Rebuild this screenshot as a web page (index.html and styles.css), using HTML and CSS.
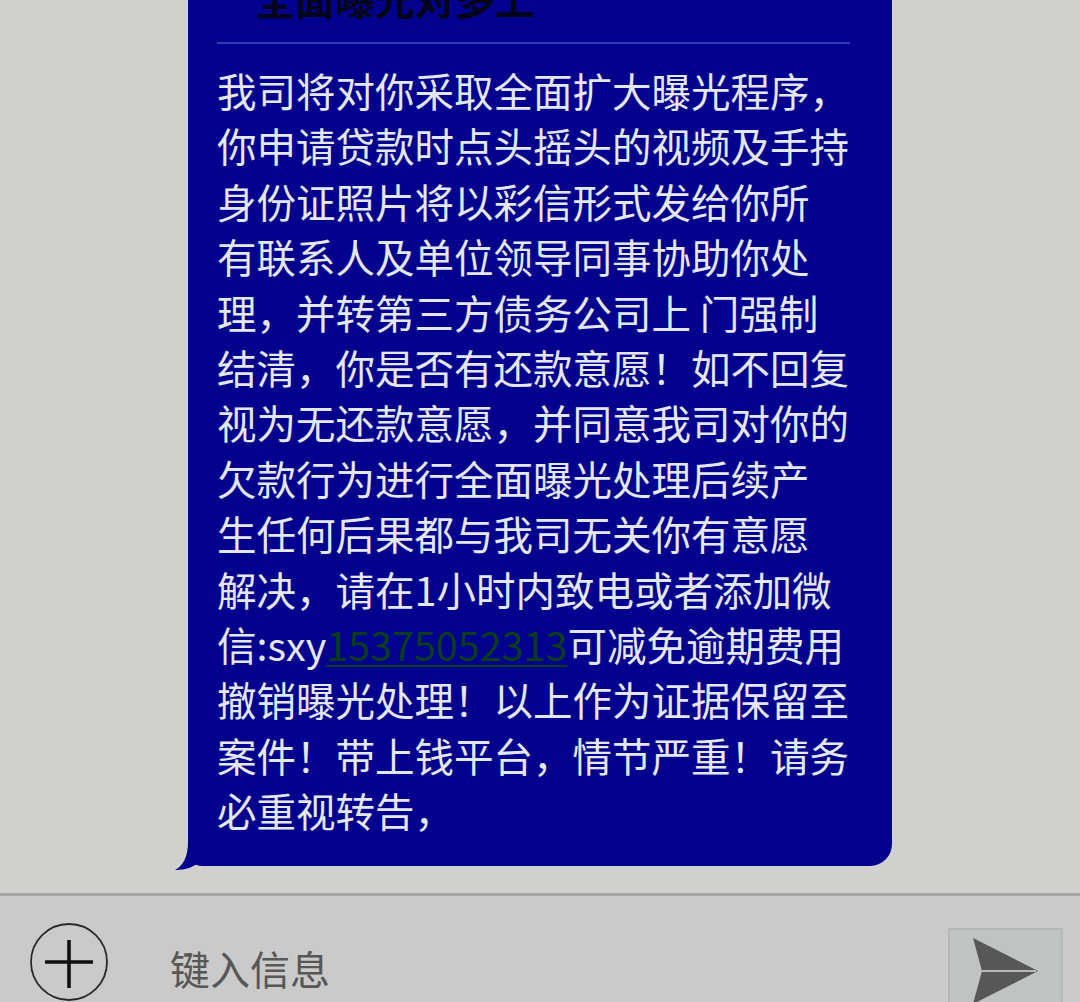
FILE: index.html
```html
<!DOCTYPE html>
<html lang="zh-CN">
<head>
<meta charset="utf-8">
<title>信息</title>
<link rel="stylesheet" href="styles.css">
</head>
<body>
<div class="screen">
  <div class="chat">
    <div class="bubble">
      <div class="title">全面曝光对多上</div>
      <div class="sep"></div>
      <div class="msg">我司将对你采取全面扩大曝光程序，<br>你申请贷款时点头摇头的视频及手持<br>身份证照片将以彩信形式发给你所<br>有联系人及单位领导同事协助你处<br>理，并转第三方债务公司上 门强制<br>结清，你是否有还款意愿！如不回复<br>视为无还款意愿，并同意我司对你的<br>欠款行为进行全面曝光处理后续产<br>生任何后果都与我司无关你有意愿<br>解决，请在1小时内致电或者添加微<br>信:sxy<span class="link">15375052313</span>可减免逾期费用<br>撤销曝光处理！以上作为证据保留至<br>案件！带上钱平台，情节严重！请务<br>必重视转告，</div>
      <svg class="tail" width="44" height="40" viewBox="0 0 44 40"><path d="M13 0 V12 Q13 33 0 40 Q17 40 25 31 Q30 36 38 36 H44 V0 Z" fill="#02018e"/></svg>
    </div>
  </div>
  <div class="bar">
    <div class="plus">
      <svg width="78" height="78" viewBox="0 0 78 78"><circle cx="39" cy="39" r="38" fill="none" stroke="#2a2a2a" stroke-width="1.8"/><path d="M15 39 H63 M39 17 V65" stroke="#111" stroke-width="3.6"/></svg>
    </div>
    <div class="placeholder">键入信息</div>
    <div class="send">
      <svg width="115" height="80" viewBox="0 0 115 80"><path d="M25 9 L90 42 L25 75 L34 42 Z" fill="#575757"/><path d="M34 42 L88 42" stroke="#d8d8d8" stroke-width="1.5"/></svg>
    </div>
  </div>
</div>
</body>
</html>
```

FILE: styles.css
```css
html, body {
  margin: 0;
  padding: 0;
  background: #cdcdcd;
}
.screen {
  width: 1080px;
  height: 1002px;
  overflow: hidden;
  font-family: "Noto Sans CJK SC", "Noto Sans", sans-serif;
  background: #cfcfcf;
}
.chat {
  height: 893px;
  overflow: hidden;
  background: #d0d0cf;
}
.bubble {
  position: relative;
  margin-left: 188px;
  margin-top: -40px;
  width: 704px;
  box-sizing: border-box;
  padding: 10px 42px 28px 29px;
  background: #02018e;
  border-radius: 0 0 22px 14px;
}
.title {
  height: 56px;
  line-height: 56px;
  font-size: 40px;
  font-weight: 700;
  color: #04041a;
  padding-left: 38px;
}
.sep {
  margin-top: 16px;
  height: 2px;
  background: #2f3cae;
}
.msg {
  margin-top: 18px;
  font-size: 39.5px;
  line-height: 55.4px;
  color: #e4e6f0;
  white-space: nowrap;
}
.link {
  color: #0c3d1a;
  text-decoration: underline;
  text-decoration-thickness: 2px;
  text-underline-offset: 4px;
}
.tail {
  position: absolute;
  left: -13px;
  bottom: -4px;
}
.bar {
  height: 106px;
  border-top: 3px solid #a8a8a8;
  background: #cacaca;
  display: flex;
  align-items: flex-start;
  padding-top: 27px;
  box-sizing: content-box;
  overflow: hidden;
}
.plus {
  margin-left: 30px;
  width: 78px;
  height: 78px;
}
.plus svg {
  display: block;
}
.placeholder {
  margin-left: 62px;
  margin-top: 25px;
  font-size: 40px;
  line-height: 40px;
  color: #575757;
}
.send {
  margin-left: auto;
  margin-right: 17px;
  margin-top: 5px;
  width: 115px;
  height: 100px;
  box-sizing: border-box;
  background: #c1c3c3;
  border: 2px solid #b6b8b8;
}
.send svg {
  display: block;
  margin: -1px 0 0 -2px;
}
```
